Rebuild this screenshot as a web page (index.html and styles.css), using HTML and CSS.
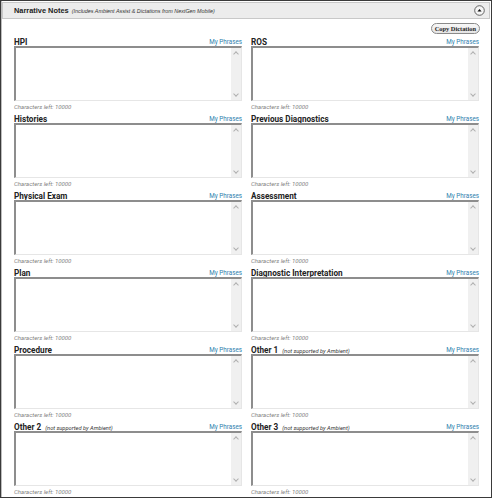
FILE: index.html
```html
<!DOCTYPE html>
<html>
<head>
<meta charset="utf-8">
<link rel="stylesheet" href="styles.css">
</head>
<body>
<div class="panel">
  <div class="panel-head">
    <span class="title">Narrative Notes</span>
    <span class="subtitle">(Includes Ambient Assist &amp; Dictations from NextGen Mobile)</span>
    <span class="collapse"><svg width="11" height="11" viewBox="0 0 11 11"><circle cx="5.5" cy="5.5" r="4.8" fill="#f4f4f4" stroke="#555" stroke-width="0.9"/><path d="M3.4 6.6 L5.5 3.9 L7.6 6.6 Z" fill="#111"/></svg></span>
  </div>
  <div class="toolbar"><button class="copy-btn">Copy Dictation</button></div>
  <div class="grid">
    <div class="cell">
      <div class="label-row"><span class="label">HPI</span><a class="phrases">My Phrases</a></div>
      <div class="field"><div class="scroll"><span class="up"></span><span class="down"></span></div></div>
      <div class="chars">Characters left: 10000</div>
    </div>
    <div class="cell">
      <div class="label-row"><span class="label">ROS</span><a class="phrases">My Phrases</a></div>
      <div class="field"><div class="scroll"><span class="up"></span><span class="down"></span></div></div>
      <div class="chars">Characters left: 10000</div>
    </div>
    <div class="cell">
      <div class="label-row"><span class="label">Histories</span><a class="phrases">My Phrases</a></div>
      <div class="field"><div class="scroll"><span class="up"></span><span class="down"></span></div></div>
      <div class="chars">Characters left: 10000</div>
    </div>
    <div class="cell">
      <div class="label-row"><span class="label">Previous Diagnostics</span><a class="phrases">My Phrases</a></div>
      <div class="field"><div class="scroll"><span class="up"></span><span class="down"></span></div></div>
      <div class="chars">Characters left: 10000</div>
    </div>
    <div class="cell">
      <div class="label-row"><span class="label">Physical Exam</span><a class="phrases">My Phrases</a></div>
      <div class="field"><div class="scroll"><span class="up"></span><span class="down"></span></div></div>
      <div class="chars">Characters left: 10000</div>
    </div>
    <div class="cell">
      <div class="label-row"><span class="label">Assessment</span><a class="phrases">My Phrases</a></div>
      <div class="field"><div class="scroll"><span class="up"></span><span class="down"></span></div></div>
      <div class="chars">Characters left: 10000</div>
    </div>
    <div class="cell">
      <div class="label-row"><span class="label">Plan</span><a class="phrases">My Phrases</a></div>
      <div class="field"><div class="scroll"><span class="up"></span><span class="down"></span></div></div>
      <div class="chars">Characters left: 10000</div>
    </div>
    <div class="cell">
      <div class="label-row"><span class="label">Diagnostic Interpretation</span><a class="phrases">My Phrases</a></div>
      <div class="field"><div class="scroll"><span class="up"></span><span class="down"></span></div></div>
      <div class="chars">Characters left: 10000</div>
    </div>
    <div class="cell">
      <div class="label-row"><span class="label">Procedure</span><a class="phrases">My Phrases</a></div>
      <div class="field"><div class="scroll"><span class="up"></span><span class="down"></span></div></div>
      <div class="chars">Characters left: 10000</div>
    </div>
    <div class="cell">
      <div class="label-row"><span class="label">Other 1 <i class="note">(not supported by Ambient)</i></span><a class="phrases">My Phrases</a></div>
      <div class="field"><div class="scroll"><span class="up"></span><span class="down"></span></div></div>
      <div class="chars">Characters left: 10000</div>
    </div>
    <div class="cell">
      <div class="label-row"><span class="label">Other 2 <i class="note">(not supported by Ambient)</i></span><a class="phrases">My Phrases</a></div>
      <div class="field"><div class="scroll"><span class="up"></span><span class="down"></span></div></div>
      <div class="chars">Characters left: 10000</div>
    </div>
    <div class="cell">
      <div class="label-row"><span class="label">Other 3 <i class="note">(not supported by Ambient)</i></span><a class="phrases">My Phrases</a></div>
      <div class="field"><div class="scroll"><span class="up"></span><span class="down"></span></div></div>
      <div class="chars">Characters left: 10000</div>
    </div>
  </div>
</div>
</body>
</html>
```
FILE: styles.css
```css
* { box-sizing: border-box; }
html, body { margin: 0; padding: 0; background: #fff; }
body { font-family: Roboto, "Liberation Sans", sans-serif; color: #222; }

.panel {
  width: 492px;
  height: 498px;
  border: 1px solid #3a3a3a;
  box-shadow: inset 1px 0 0 #bdbdbd;
  padding: 1px 1px 0 1px;
}

.panel-head {
  height: 17px;
  background: #ececec;
  border: 1px solid #c8c8c8;
  display: flex;
  align-items: center;
  padding-left: 11px;
  padding-right: 4px;
}
.title { font-family: "Liberation Sans", Arial, sans-serif; font-weight: bold; font-size: 7.4px; color: #222; }
.subtitle { font-family: "Liberation Sans", Arial, sans-serif; font-style: italic; font-size: 5.4px; color: #333; margin-left: 3px; }
.collapse { margin-left: auto; display: flex; }

.toolbar { display: flex; justify-content: flex-end; padding: 4px 10px 0 0; height: 15px; }
.copy-btn {
  height: 11px;
  padding: 0 3px;
  font-family: "Liberation Serif", "Times New Roman", serif;
  font-weight: bold;
  font-size: 6.4px;
  color: #222;
  background: linear-gradient(#f8f8f8, #e4e4e4);
  border: 1px solid #8a8a8a;
  border-radius: 6px;
  line-height: 9px;
}

.grid {
  display: grid;
  grid-template-columns: 228px 228px;
  column-gap: 9px;
  padding-left: 12px;
}

.cell { display: flex; flex-direction: column; }
.label-row { height: 12px; display: flex; align-items: center; justify-content: space-between; padding-top: 3px; }
.label { font-weight: bold; font-size: 8.2px; color: #222; }
.note { font-weight: normal; font-size: 5.7px; color: #333; margin-left: 2px; }
.phrases { font-size: 6.3px; color: #2f7fae; text-decoration: none; }

.field {
  height: 55px;
  border-top: 2px solid #8d8d8d;
  border-left: 2px solid #8d8d8d;
  border-right: 1px solid #e6e6e6;
  border-bottom: 1px solid #e6e6e6;
  display: flex;
  justify-content: flex-end;
  background: #fff;
}
.scroll {
  width: 10px;
  background: #f0f0f0;
  display: flex;
  flex-direction: column;
  justify-content: space-between;
  align-items: center;
  padding: 3px 0 3px;
}
.up, .down {
  width: 4px; height: 4px;
  border-left: 1px solid #b0b0b0;
  border-top: 1px solid #b0b0b0;
}
.up { transform: translateY(1px) rotate(45deg); }
.down { transform: translateY(-1px) rotate(225deg); }

.chars {
  height: 10px;
  font-style: italic;
  font-size: 6px;
  color: #808080;
  display: flex;
  align-items: center;
}
```
